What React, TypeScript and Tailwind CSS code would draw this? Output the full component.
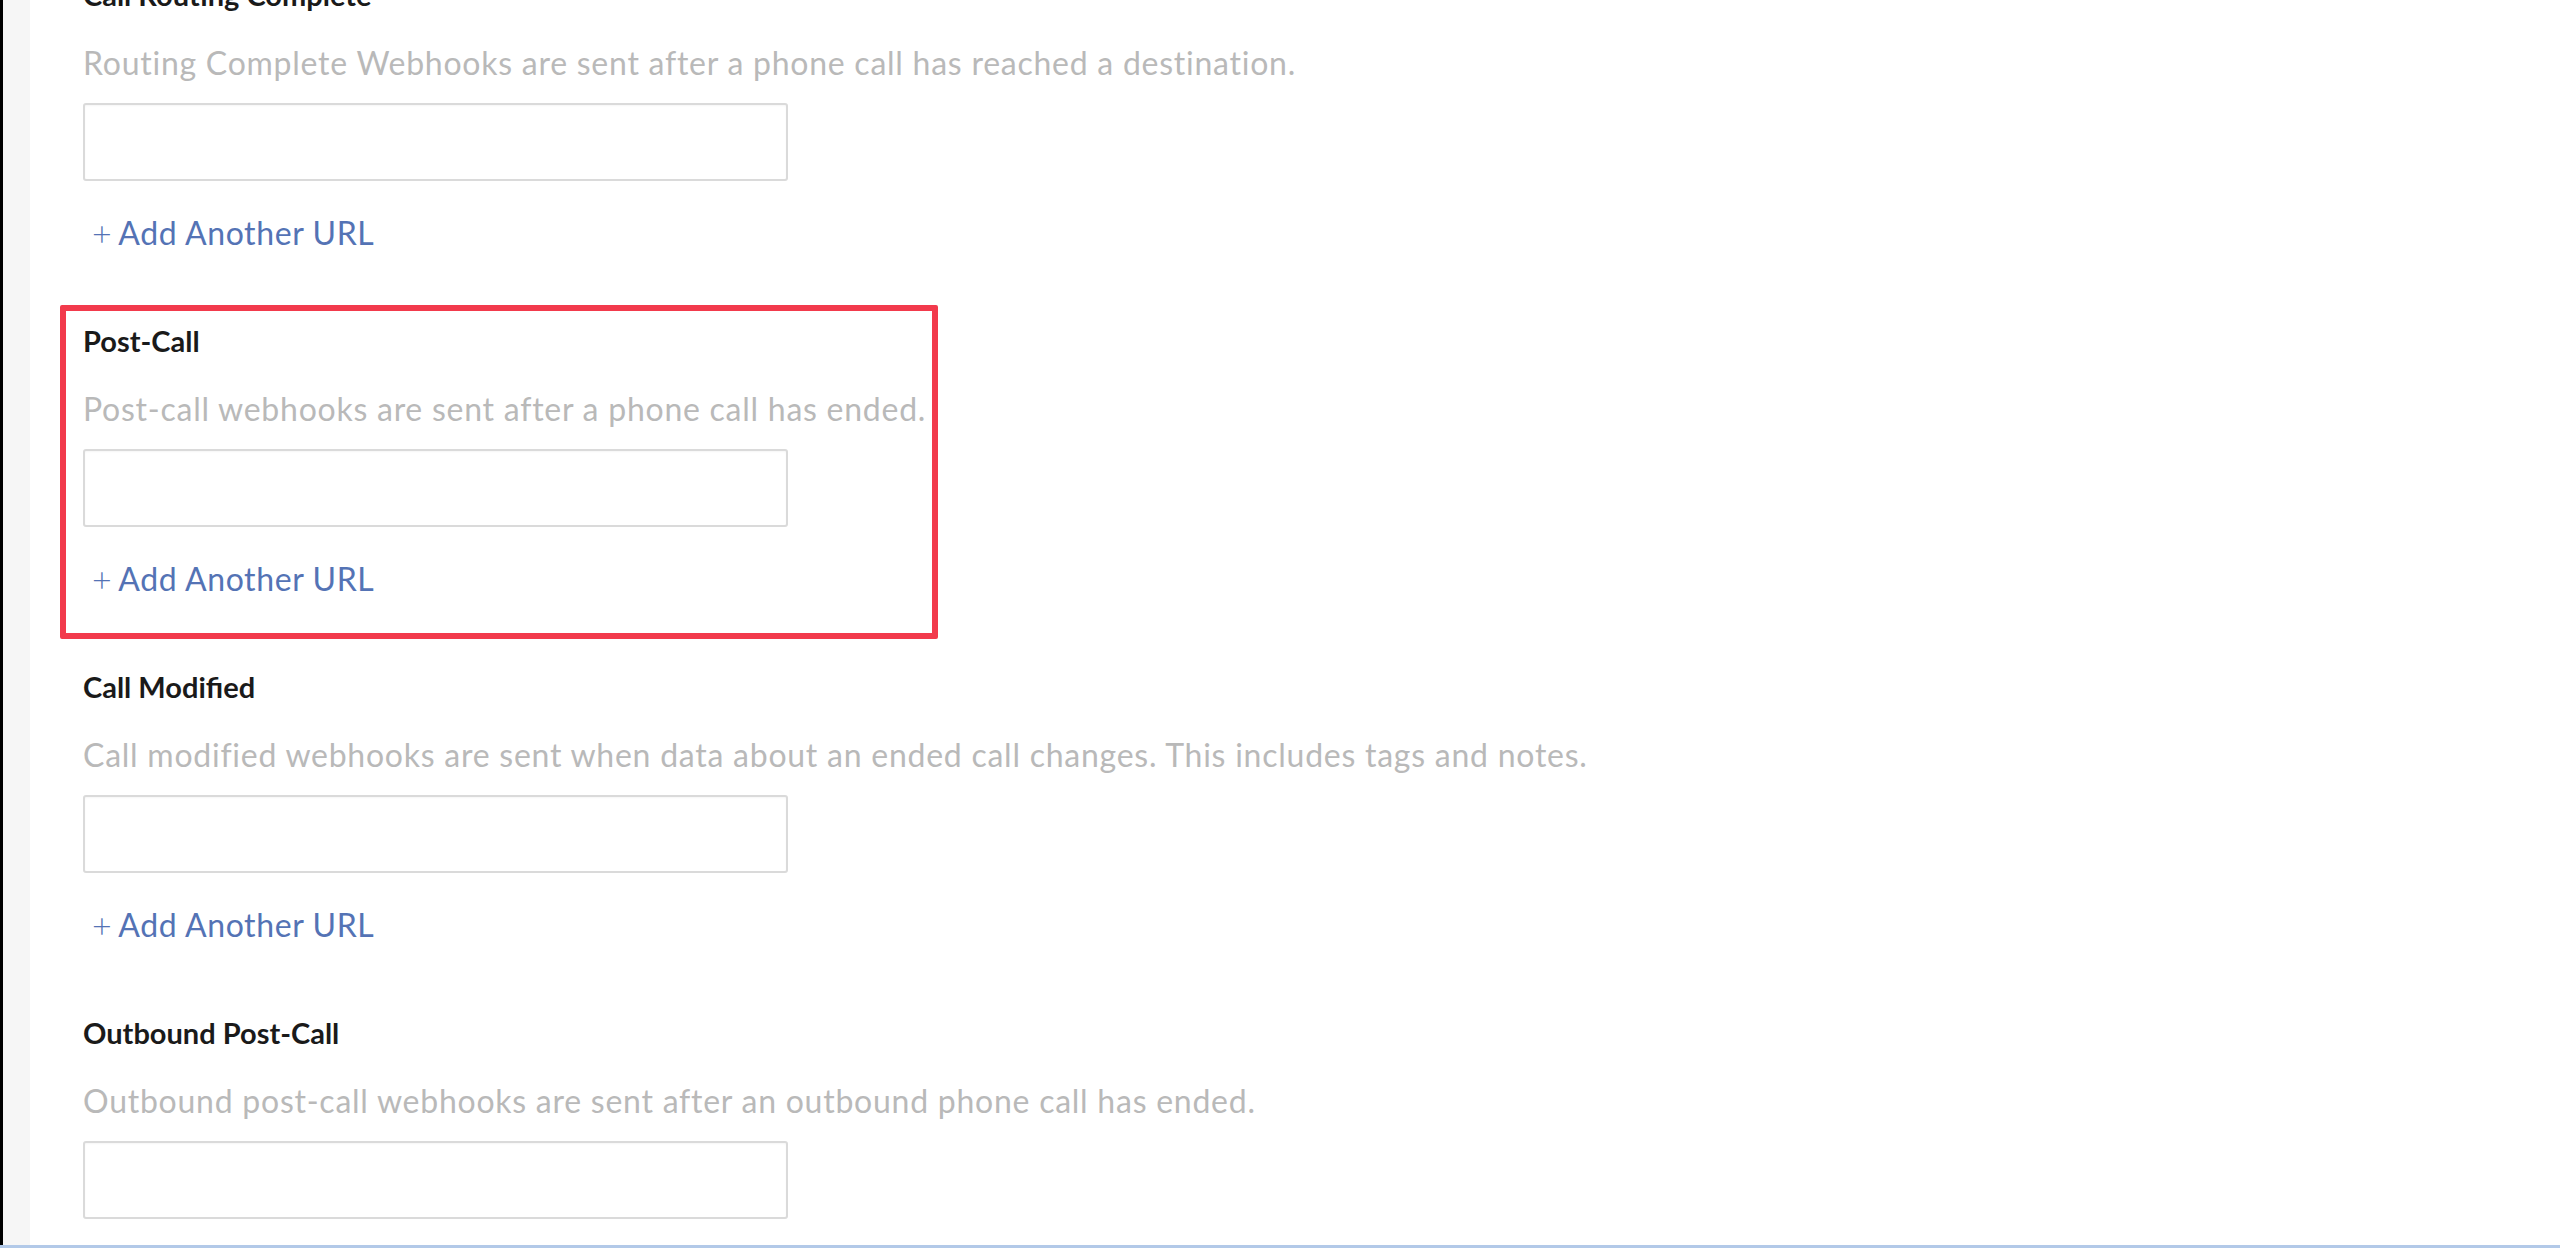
import React from "react";

type Section = { title: string; desc: string; add: boolean; highlight?: boolean };

const sections: Section[] = [
  { title: "Call Routing Complete", desc: "Routing Complete Webhooks are sent after a phone call has reached a destination.", add: true },
  { title: "Post-Call", desc: "Post-call webhooks are sent after a phone call has ended.", add: true, highlight: true },
  { title: "Call Modified", desc: "Call modified webhooks are sent when data about an ended call changes. This includes tags and notes.", add: true },
  { title: "Outbound Post-Call", desc: "Outbound post-call webhooks are sent after an outbound phone call has ended.", add: false },
];

function Block({ s }: { s: Section }) {
  return (
    <div className="flex flex-col">
      <div className="h-[34px] leading-[32px] text-[29px] font-bold text-[#1a1a1a] whitespace-nowrap">{s.title}</div>
      <div className="mt-[33px] h-[34px] leading-[34px] text-[32px] tracking-[0.75px] text-[#b9b9b9] whitespace-nowrap">{s.desc}</div>
      <div className="mt-[23px] w-[705px] h-[78px] rounded-[3px] border-2 border-[#dadada] bg-white shadow-[inset_0_1px_2px_rgba(0,0,0,0.04)]" />
      {s.add && (
        <div className="mt-[35px] ml-[9px] h-[34px] leading-[36px] text-[32px] tracking-[0.6px] text-[#5473b5] whitespace-nowrap flex items-center">
          <span className="font-light mr-[6px] text-[34px]">+</span>
          <span>Add Another URL</span>
        </div>
      )}
    </div>
  );
}

export default function App() {
  return (
    <div className="w-[2560px] h-[1248px] overflow-hidden bg-white flex flex-col" style={{ fontFamily: "Lato, 'Noto Sans', sans-serif" }}>
      <div className="flex-1 flex min-h-0">
        <div className="w-[3px] bg-black" />
        <div className="w-[27px] bg-[#f6f6f6]" />
        <div className="flex-1 pl-[53px] overflow-hidden">
          <div className="-mt-[21px] flex flex-col gap-[75px]">
            {sections.map((s) =>
              s.highlight ? (
                <div key={s.title} className="w-[878px] -ml-[23px] pl-[17px] -mt-[20px] pt-[14px] -mb-[43px] pb-[37px] border-[6px] border-[#f23a4c] rounded-[2px]">
                  <Block s={s} />
                </div>
              ) : (
                <Block key={s.title} s={s} />
              )
            )}
          </div>
        </div>
      </div>
      <div className="h-[3px] bg-[#b2c9e8]" />
    </div>
  );
}
